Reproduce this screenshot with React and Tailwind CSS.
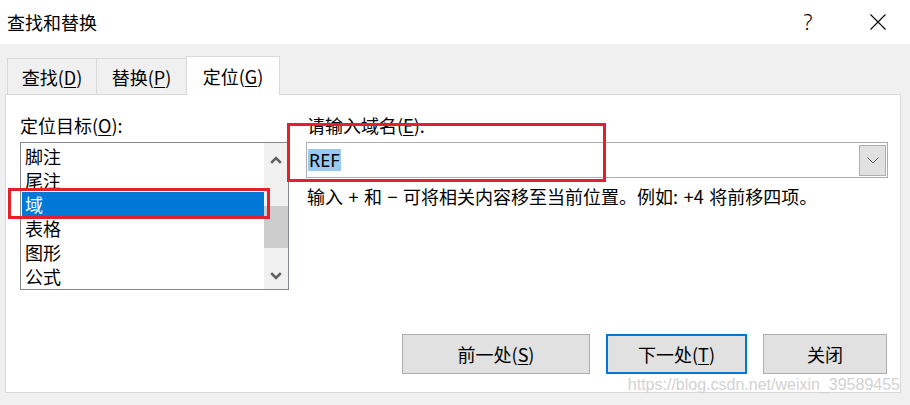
import React from "react";

function UpArrow() {
  return (
    <svg width="12" height="8" viewBox="0 0 12 8">
      <path d="M1.2 6.8 L6 2 L10.8 6.8" fill="none" stroke="#606060" strokeWidth="2.6" />
    </svg>
  );
}

function DownArrow() {
  return (
    <svg width="12" height="8" viewBox="0 0 12 8">
      <path d="M1.2 1.2 L6 6 L10.8 1.2" fill="none" stroke="#606060" strokeWidth="2.6" />
    </svg>
  );
}

const items = ["脚注", "尾注", "域", "表格", "图形", "公式"];

export default function App() {
  return (
    <div className="relative w-[910px] h-[405px] overflow-hidden bg-[#f0f0f0] text-black font-['Noto_Sans_CJK_SC','Noto_Sans',sans-serif]">
      {/* Title bar */}
      <div className="h-[44px] bg-white flex items-center">
        <div className="flex-1 pl-[7px] text-[18px] leading-[24px]">查找和替换</div>
        <div className="w-[46px] h-[44px] flex items-center justify-center text-[21px] font-light leading-none font-['Noto_Sans',sans-serif]">
          ?
        </div>
        <div className="w-[24px]" />
        <div className="w-[46px] h-[44px] flex items-center justify-center">
          <svg width="16" height="16" viewBox="0 0 16 16">
            <path d="M0.5 0.5 L15.5 15.5 M15.5 0.5 L0.5 15.5" stroke="#000" strokeWidth="1.1" fill="none" />
          </svg>
        </div>
        <div className="w-[9px]" />
      </div>

      {/* Tabs */}
      <div className="h-[50px] pl-[7px] flex items-end">
        <div className="w-[90px] h-[36px] border-l border-t border-r border-[#d9d9d9] bg-[#f0f0f0] flex items-center justify-center text-[18px] leading-[24px]">
          查找(<span className="underline underline-offset-2">D</span>)
        </div>
        <div className="w-[89px] h-[36px] border-t border-[#d9d9d9] bg-[#f0f0f0] flex items-center justify-center text-[18px] leading-[24px]">
          替换(<span className="underline underline-offset-2">P</span>)
        </div>
        <div className="relative z-10 -mb-px w-[94px] h-[39px] border-l border-t border-r border-[#d9d9d9] bg-white flex items-center justify-center text-[18px] leading-[24px]">
          定位(<span className="underline underline-offset-2">G</span>)
        </div>
      </div>

      {/* Panel */}
      <div className="ml-[5px] w-[896px] h-[299px] bg-white border border-[#d9d9d9] flex flex-col">
        <div className="flex pl-[14px] pt-[18px] gap-[17px]">
          {/* Left column */}
          <div className="w-[269px] flex flex-col">
            <div className="h-[24px] text-[18px] leading-[24px]">
              定位目标(<span className="underline underline-offset-2">O</span>):
            </div>
            <div className="mt-[5px] h-[148px] border border-[#828790] flex">
              <div className="flex-1 pl-[1px] pt-[1px] overflow-hidden">
                {items.map((it, i) => (
                  <div
                    key={it}
                    className={
                      i === 2
                        ? "h-[24px] pl-[3px] bg-[#0078d7] text-white text-[18px] leading-[24px]"
                        : "h-[24px] pl-[3px] text-[18px] leading-[24px]"
                    }
                  >
                    {it}
                  </div>
                ))}
              </div>
              <div className="w-[24px] bg-[#f0f0f0] flex flex-col">
                <div className="h-[33px] flex items-center justify-center">
                  <UpArrow />
                </div>
                <div className="flex-1">
                  <div className="mt-[30px] h-[42px] bg-[#cdcdcd]" />
                </div>
                <div className="h-[26px] flex items-center justify-center">
                  <DownArrow />
                </div>
              </div>
            </div>
          </div>

          {/* Right column */}
          <div className="w-[582px] flex flex-col">
            <div className="h-[24px] text-[18px] leading-[24px] pl-[1px]">
              请输入域名(<span className="underline underline-offset-2">E</span>):
            </div>
            <div className="mt-[5px] h-[36px] border border-[#adadad] flex items-center">
              <div className="flex-1 pl-[1px] flex items-center">
                <span className="h-[22px] px-[1px] bg-[#99c9ef] text-[18px] leading-[22px] font-['Noto_Sans',sans-serif]">
                  REF
                </span>
              </div>
              <div className="w-[27px] h-[31px] mr-[1px] border border-[#adadad] bg-[#e1e1e1] flex items-center justify-center">
                <svg width="12" height="7" viewBox="0 0 12 7">
                  <path d="M0.5 0.5 L6 6 L11.5 0.5" fill="none" stroke="#606060" strokeWidth="1" />
                </svg>
              </div>
            </div>
            <div className="mt-[6px] pl-[1px] text-[18px] leading-[24px] whitespace-nowrap [word-spacing:1.5px]">
              输入 + 和 − 可将相关内容移至当前位置。例如: +4 将前移四项。
            </div>
          </div>
        </div>

        {/* Buttons */}
        <div className="mt-auto flex justify-end gap-[16px] pr-[13px] pb-[18px]">
          <div className="w-[188px] h-[40px] border border-[#adadad] bg-[#e1e1e1] flex items-center justify-center text-[18px] leading-[24px]">
            前一处(<span className="underline underline-offset-2">S</span>)
          </div>
          <div className="w-[141px] h-[40px] border-2 border-[#0078d7] bg-[#e1e1e1] flex items-center justify-center text-[18px] leading-[24px]">
            下一处(<span className="underline underline-offset-2">T</span>)
          </div>
          <div className="w-[124px] h-[40px] border border-[#adadad] bg-[#e1e1e1] flex items-center justify-center text-[18px] leading-[24px]">
            关闭
          </div>
        </div>
      </div>

      {/* Annotation boxes */}
      <div className="absolute left-[8px] top-[188px] w-[262px] h-[31px] border-[3px] border-[#e5202a]" />
      <div className="absolute left-[287px] top-[123px] w-[319px] h-[59px] border-[3px] border-[#e5202a]" />

      {/* Watermark */}
      <div className="absolute right-[10px] top-[374px] text-[16px] leading-[22px] text-[#d2d2d2] font-['Liberation_Sans',sans-serif]">
        https://blog.csdn.net/weixin_39589455
      </div>
    </div>
  );
}
